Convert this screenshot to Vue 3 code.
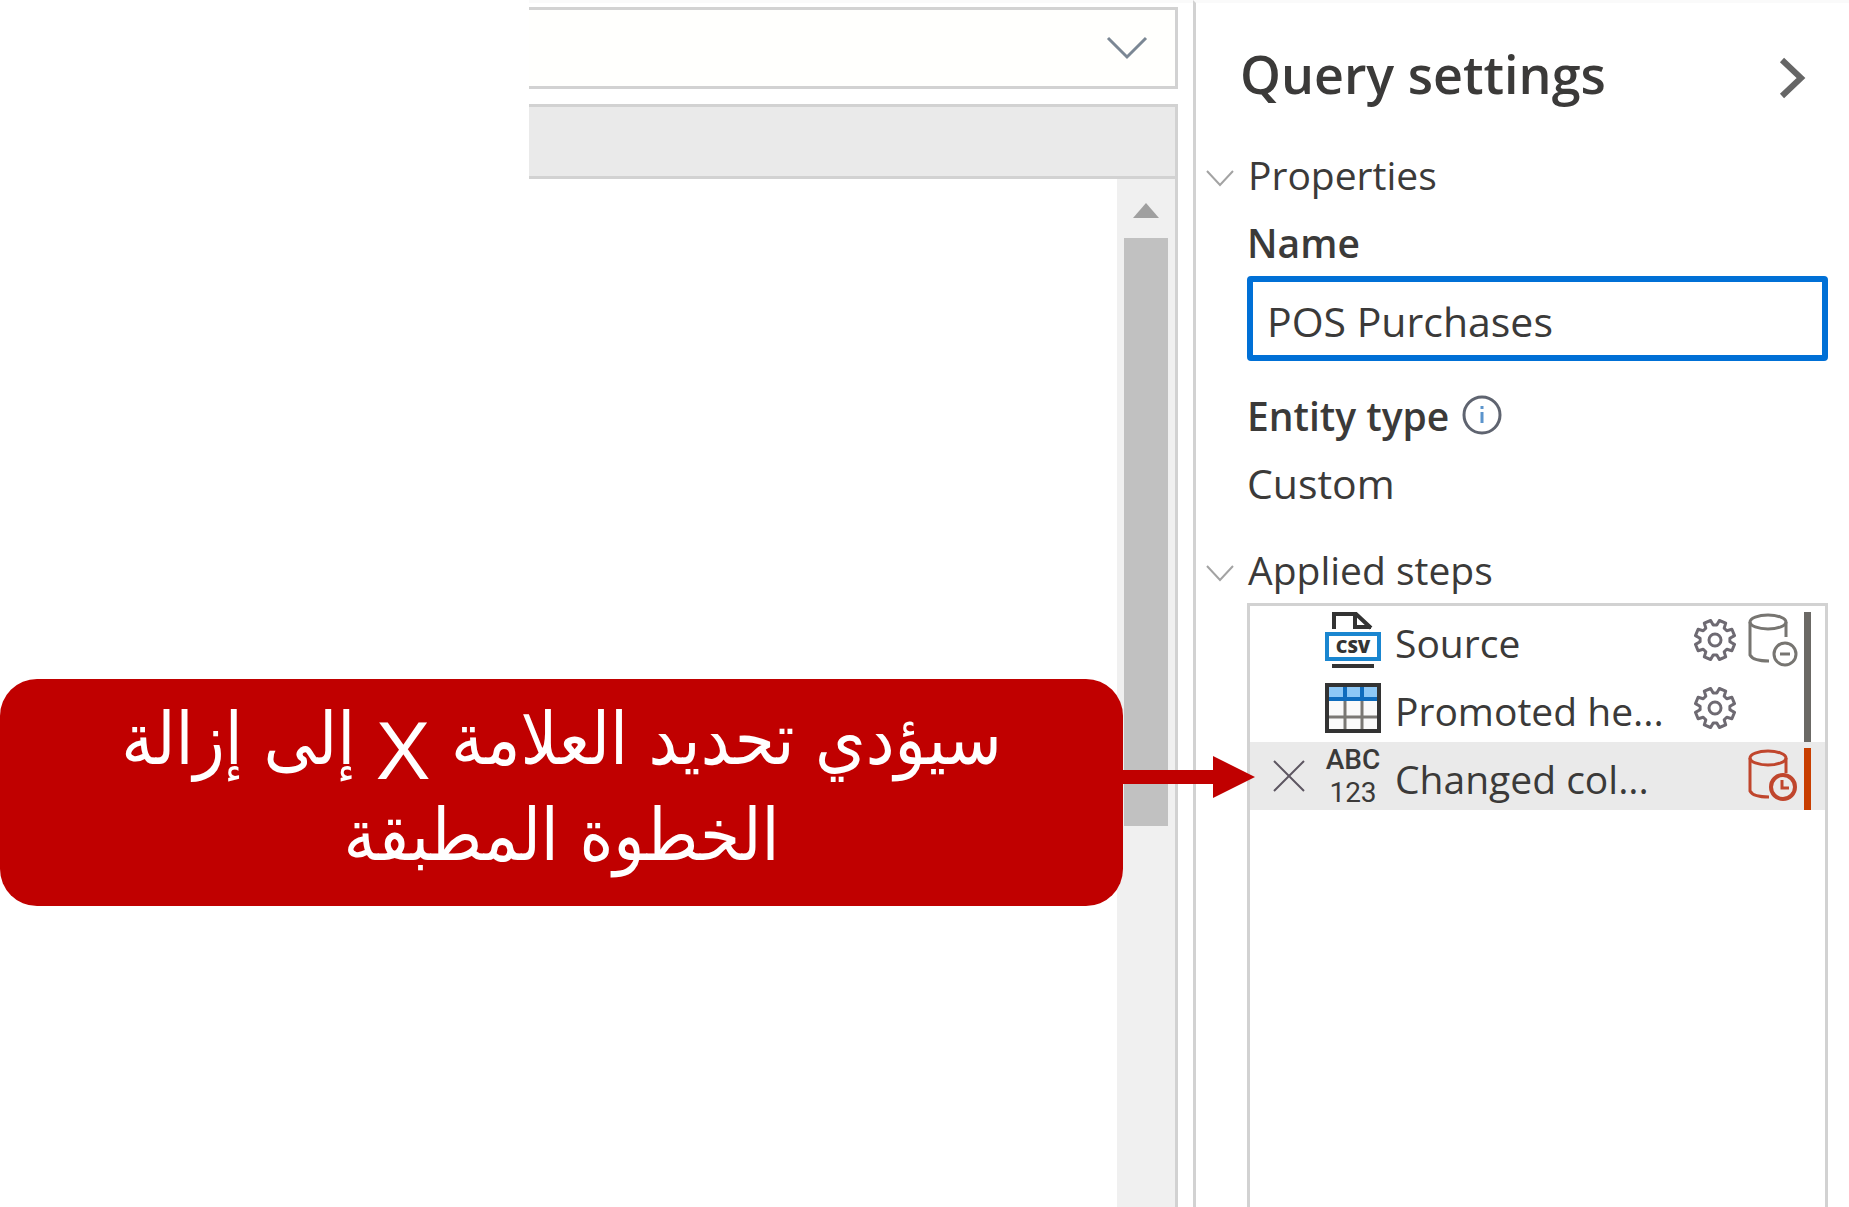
<script setup>
import { ref } from 'vue'

const queryName = ref('POS Purchases')

const steps = [
  { label: 'Source', icon: 'csv', settings: true, db: 'minus', bar: 'start' },
  { label: 'Promoted he...', icon: 'table', settings: true, db: '', bar: '' },
  { label: 'Changed col...', icon: 'types', settings: false, db: 'clock', bar: 'start', selected: true },
]

// Outline of an eight-toothed cog around (21, 21)
const gearPath = (() => {
  const points = []
  const teeth = [[-0.27, 15], [-0.17, 20], [0.17, 20], [0.27, 15]]
  for (let i = 0; i < 8; i++) {
    const base = (i + 0.5) * (Math.PI / 4)
    for (const [offset, radius] of teeth) {
      const a = base + offset
      points.push(`${(21 + radius * Math.cos(a)).toFixed(1)} ${(21 + radius * Math.sin(a)).toFixed(1)}`)
    }
  }
  return `M${points.join('L')}Z`
})()
</script>

<template>
  <div class="page">
    <main class="editor">
      <div class="formula">
        <button class="plain" aria-label="Expand formula bar">
          <svg width="42" height="24" viewBox="0 0 42 24"><path d="M2 2L21 21L40 2" fill="none" stroke="#7b8794" stroke-width="3" /></svg>
        </button>
      </div>
      <div class="grid">
        <div class="grid-head"></div>
        <div class="grid-body">
          <div class="scrollbar">
            <svg width="26" height="15" viewBox="0 0 26 15"><path d="M13 0L26 15H0Z" fill="#a0a0a0" /></svg>
            <div class="thumb"></div>
          </div>
        </div>
      </div>
    </main>

    <aside class="settings">
      <header class="title-row">
        <h1>Query settings</h1>
        <button class="plain" aria-label="Collapse pane">
          <svg width="28" height="42" viewBox="0 0 28 42"><path d="M4 3L23 21L4 39" fill="none" stroke="#666" stroke-width="6" /></svg>
        </button>
      </header>

      <h2 class="row section">
        <svg width="28" height="17" viewBox="0 0 28 17"><path d="M1 1L14 15L27 1" fill="none" stroke="#a3a3a3" stroke-width="2" /></svg>
        Properties
      </h2>
      <div class="fields">
        <label class="row strong" for="query-name">Name</label>
        <input id="query-name" v-model="queryName" type="text" />
        <div class="row strong entity">
          Entity type
          <svg width="42" height="42" viewBox="0 0 42 42" fill="none" stroke="#5f6470">
            <circle cx="21" cy="21" r="18" stroke-width="3" />
            <path d="M21 18V29M21 12V15" stroke="#5b94cc" stroke-width="3" />
          </svg>
        </div>
        <div class="row value">Custom</div>
      </div>

      <h2 class="row section steps-title">
        <svg width="28" height="17" viewBox="0 0 28 17"><path d="M1 1L14 15L27 1" fill="none" stroke="#a3a3a3" stroke-width="2" /></svg>
        Applied steps
      </h2>
      <ul class="steps">
        <li v-for="step in steps" :key="step.label" :class="{ selected: step.selected }">
          <span class="remove">
            <button v-if="step.selected" class="plain" aria-label="Remove step">
              <svg width="32" height="32" viewBox="0 0 32 32"><path d="M1 1L31 31M31 1L1 31" stroke="#5d5661" stroke-width="2" /></svg>
            </button>
          </span>

          <svg v-if="step.icon === 'csv'" class="kind" width="56" height="56" viewBox="0 0 56 56" fill="none">
            <path d="M9 17V2H31L46 16" stroke="#333" stroke-width="4" />
            <path d="M30 2V15H46" stroke="#333" stroke-width="4" />
            <rect x="2" y="22" width="52" height="25" fill="#fff" stroke="#1a86d0" stroke-width="4" />
            <text x="28" y="41" text-anchor="middle" class="csv">CSV</text>
            <path d="M7 54H49" stroke="#333" stroke-width="4" />
          </svg>
          <svg v-else-if="step.icon === 'table'" class="kind" width="56" height="50" viewBox="0 0 56 50" fill="none">
            <rect x="2" y="2" width="52" height="46" fill="#fafafa" />
            <rect x="4" y="4" width="48" height="11" fill="#8ec8f6" />
            <path d="M20 17V47M37 17V47M3 34H53" stroke="#7a7874" stroke-width="3" />
            <path d="M20 3V16M37 3V16M3 16H53" stroke="#0f6cbd" stroke-width="4" />
            <rect x="2" y="2" width="52" height="46" stroke="#333" stroke-width="4" />
          </svg>
          <span v-else class="kind types"><b>ABC</b><span>123</span></span>

          <span class="label">{{ step.label }}</span>

          <button v-if="step.settings" class="plain" aria-label="Step settings">
            <svg width="42" height="42" viewBox="0 0 42 42" fill="none" stroke="#6e6a72" stroke-width="3" stroke-linejoin="round">
              <path :d="gearPath" />
              <circle cx="21" cy="21" r="6" />
            </svg>
          </button>
          <span class="db">
            <svg v-if="step.db" width="50" height="54" viewBox="0 0 50 54" fill="none" :stroke="step.db === 'clock' ? '#c0462d' : '#777571'" stroke-width="3">
              <ellipse cx="20" cy="9" rx="18" ry="7" />
              <path d="M2 9V42Q5 48 21 48M38 9V24" />
              <template v-if="step.db === 'clock'">
                <circle cx="35" cy="38" r="12" stroke-width="4" />
                <path d="M34 31V39H41" />
              </template>
              <template v-else>
                <circle cx="37" cy="41" r="11" />
                <path d="M32 41H42" />
              </template>
            </svg>
          </span>
          <span class="bar" :class="step.bar"></span>
        </li>
      </ul>
    </aside>

    <div class="callout">
      <p dir="rtl" lang="ar">سيؤدي تحديد العلامة <span class="latin">X</span> إلى إزالة<br />الخطوة المطبقة</p>
      <svg width="132" height="42" viewBox="0 0 132 42"><path d="M0 14H90V0L132 21L90 42V28H0Z" fill="#c00000" /></svg>
    </div>
  </div>
</template>

<style>
body {
  margin: 0;
  background: #fff;
}
</style>

<style scoped>
.page {
  position: relative;
  display: flex;
  min-height: 100vh;
  font-family: "Open Sans", "Noto Sans", sans-serif;
  font-size: 39px;
  color: #3b3a39;
}
.plain {
  display: block;
  padding: 0;
  border: 0;
  background: none;
}
svg {
  display: block;
  flex: none;
}

.editor {
  flex: 1;
  display: flex;
  flex-direction: column;
  margin-left: 529px;
  padding: 4px 15px 0 0;
  border-top: 3px solid #fafafa;
}
.formula {
  display: flex;
  align-items: center;
  justify-content: flex-end;
  height: 76px;
  padding-right: 27px;
  border: 3px solid #d2d2d2;
  border-left: 0;
  background: #fffffd;
}
.grid {
  flex: 1;
  display: flex;
  flex-direction: column;
  margin-top: 15px;
  border: 3px solid #d2d2d2;
  border-width: 3px 3px 0 0;
}
.grid-head {
  height: 69px;
  border-bottom: 3px solid #d2d2d2;
  background: #eaeaea;
}
.grid-body {
  flex: 1;
  display: flex;
  justify-content: flex-end;
}
.scrollbar {
  display: flex;
  flex-direction: column;
  align-items: center;
  gap: 20px;
  width: 58px;
  padding-top: 24px;
  background: #f0f0f0;
}
.thumb {
  width: 44px;
  height: 588px;
  background: #c1c1c1;
}

.settings {
  box-sizing: border-box;
  width: 656px;
  display: flex;
  flex-direction: column;
  padding: 37px 21px 0 10px;
  border-left: 3px solid #d2d2d2;
  border-top: 3px solid #fafafa;
}
.title-row {
  display: flex;
  align-items: center;
  justify-content: space-between;
  height: 68px;
  margin-bottom: 32px;
  padding: 0 22px 0 34px;
}
.title-row .plain {
  padding-top: 8px;
}
h1 {
  margin: 0;
  font-size: 52px;
  line-height: 68px;
  font-weight: 600;
}
.row {
  display: flex;
  align-items: center;
  height: 68px;
  margin: 0;
  font-size: 39px;
  font-weight: 400;
  white-space: nowrap;
}
.section {
  gap: 14px;
}
.section svg {
  padding-top: 8px;
}
.steps-title {
  margin-top: 18px;
}
.fields,
.steps {
  margin-left: 41px;
}
.strong {
  font-weight: 600;
}
.value,
input {
  font-size: 41px;
}
.entity {
  gap: 12px;
  margin-top: 20px;
}
input {
  display: block;
  box-sizing: border-box;
  width: 100%;
  height: 85px;
  padding: 4px 14px 0;
  border: 6px solid #0070d6;
  border-radius: 4px;
  background: #fff;
  color: inherit;
  font-family: inherit;
  outline: none;
}

.steps {
  flex: 1;
  margin-top: 0;
  margin-bottom: 0;
  padding: 0;
  border: 3px solid #d2d2d2;
  border-bottom: 0;
  list-style: none;
}
.steps li {
  display: flex;
  align-items: center;
  height: 68px;
  padding-right: 14px;
}
.steps .selected {
  background: #eaeaea;
}
.remove {
  width: 52px;
  padding-left: 23px;
}
.kind {
  margin-right: 14px;
}
.csv {
  font-size: 18px;
  font-weight: 800;
  fill: #333;
}
.types {
  width: 56px;
  font-family: Roboto, sans-serif;
  font-size: 28px;
  line-height: 33px;
  text-align: center;
}
.types b {
  display: block;
  font-weight: 500;
}
.label {
  flex: 1;
  padding-top: 4px;
  white-space: nowrap;
}
.db {
  width: 50px;
  margin: 0 6px 0 12px;
}
.bar {
  align-self: stretch;
  width: 7px;
  background: #6b6965;
}
.bar.start {
  margin-top: 6px;
}
.selected .bar {
  background: #c83e00;
}

.callout {
  position: absolute;
  top: 679px;
  left: 0;
  right: 594px;
  display: flex;
  align-items: flex-start;
}
.callout p {
  box-sizing: border-box;
  flex: 1;
  min-height: 227px;
  margin: 0;
  padding: 12px 0;
  border-radius: 37px;
  background: #c00000;
  color: #fff;
  font-family: "DejaVu Sans Condensed", "DejaVu Sans", sans-serif;
  font-size: 72px;
  line-height: 96px;
  text-align: center;
}
.latin {
  font-family: "Liberation Sans", sans-serif;
  font-size: 82px;
  line-height: 0;
  vertical-align: sub;
}
.callout svg {
  margin-top: 77px;
}
</style>
